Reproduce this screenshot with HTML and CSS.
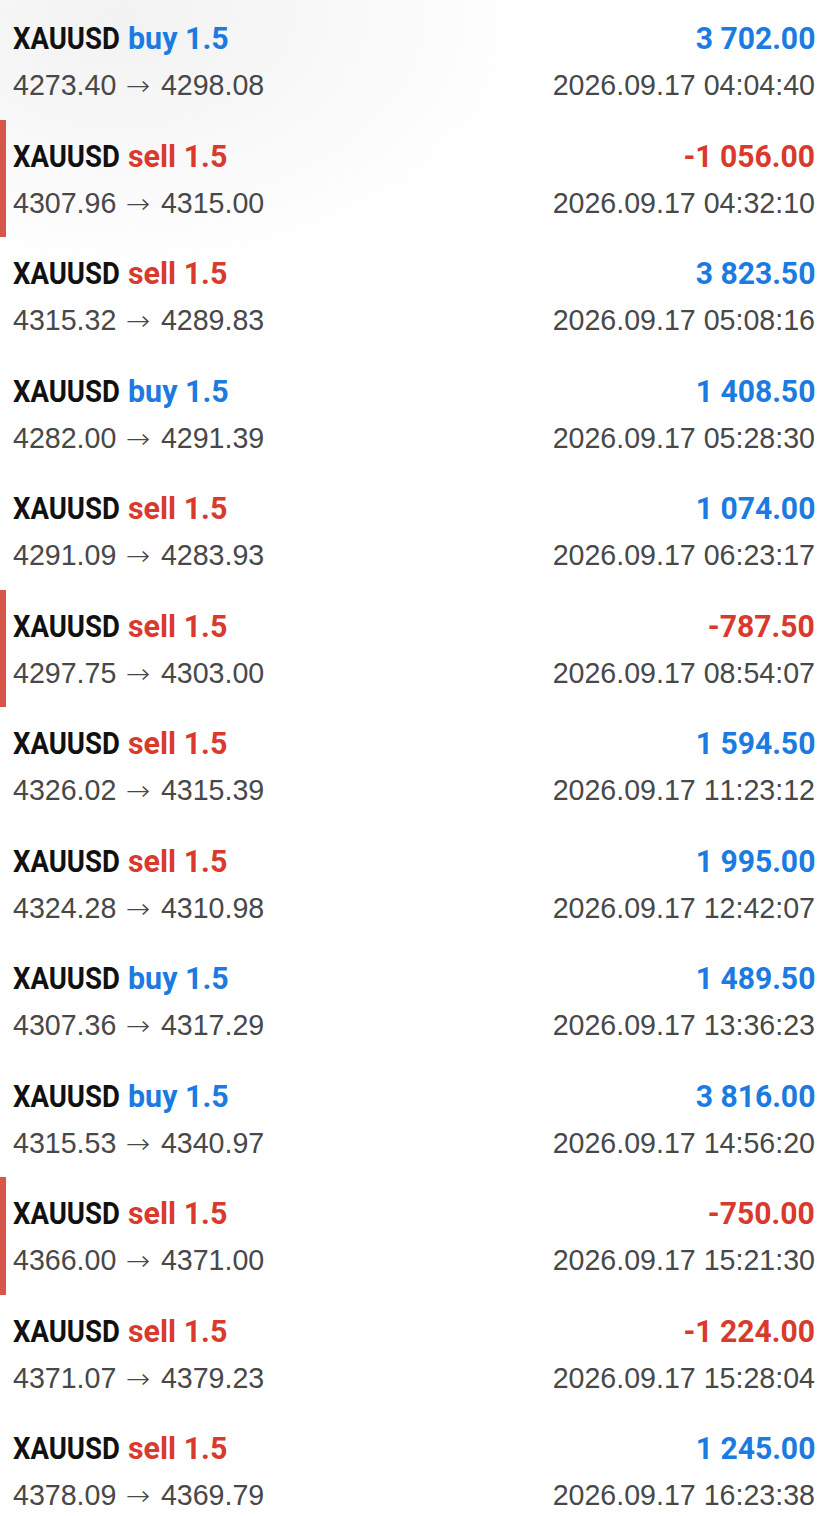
FILE: index.html
```html
<!DOCTYPE html>
<html>

<head>
    <title>History</title>
    <link rel="stylesheet" href="styles.css">
</head>

<body>
    <div class="history">
        <div class="trade">
            <div class="left">
                <div class="title"><span class="sym">XAUUSD</span> <span class="side buy">buy 1.5</span></div>
                <div class="sub">4273.40 <span class="arrow">&rarr;</span> 4298.08</div>
            </div>
            <div class="right">
                <div class="title"><span class="amount buy">3 702.00</span></div>
                <div class="sub">2026.09.17 04:04:40</div>
            </div>
        </div>
        <div class="trade loss">
            <div class="left">
                <div class="title"><span class="sym">XAUUSD</span> <span class="side sell">sell 1.5</span></div>
                <div class="sub">4307.96 <span class="arrow">&rarr;</span> 4315.00</div>
            </div>
            <div class="right">
                <div class="title"><span class="amount sell">-1 056.00</span></div>
                <div class="sub">2026.09.17 04:32:10</div>
            </div>
        </div>
        <div class="trade">
            <div class="left">
                <div class="title"><span class="sym">XAUUSD</span> <span class="side sell">sell 1.5</span></div>
                <div class="sub">4315.32 <span class="arrow">&rarr;</span> 4289.83</div>
            </div>
            <div class="right">
                <div class="title"><span class="amount buy">3 823.50</span></div>
                <div class="sub">2026.09.17 05:08:16</div>
            </div>
        </div>
        <div class="trade">
            <div class="left">
                <div class="title"><span class="sym">XAUUSD</span> <span class="side buy">buy 1.5</span></div>
                <div class="sub">4282.00 <span class="arrow">&rarr;</span> 4291.39</div>
            </div>
            <div class="right">
                <div class="title"><span class="amount buy">1 408.50</span></div>
                <div class="sub">2026.09.17 05:28:30</div>
            </div>
        </div>
        <div class="trade">
            <div class="left">
                <div class="title"><span class="sym">XAUUSD</span> <span class="side sell">sell 1.5</span></div>
                <div class="sub">4291.09 <span class="arrow">&rarr;</span> 4283.93</div>
            </div>
            <div class="right">
                <div class="title"><span class="amount buy">1 074.00</span></div>
                <div class="sub">2026.09.17 06:23:17</div>
            </div>
        </div>
        <div class="trade loss">
            <div class="left">
                <div class="title"><span class="sym">XAUUSD</span> <span class="side sell">sell 1.5</span></div>
                <div class="sub">4297.75 <span class="arrow">&rarr;</span> 4303.00</div>
            </div>
            <div class="right">
                <div class="title"><span class="amount sell">-787.50</span></div>
                <div class="sub">2026.09.17 08:54:07</div>
            </div>
        </div>
        <div class="trade">
            <div class="left">
                <div class="title"><span class="sym">XAUUSD</span> <span class="side sell">sell 1.5</span></div>
                <div class="sub">4326.02 <span class="arrow">&rarr;</span> 4315.39</div>
            </div>
            <div class="right">
                <div class="title"><span class="amount buy">1 594.50</span></div>
                <div class="sub">2026.09.17 11:23:12</div>
            </div>
        </div>
        <div class="trade">
            <div class="left">
                <div class="title"><span class="sym">XAUUSD</span> <span class="side sell">sell 1.5</span></div>
                <div class="sub">4324.28 <span class="arrow">&rarr;</span> 4310.98</div>
            </div>
            <div class="right">
                <div class="title"><span class="amount buy">1 995.00</span></div>
                <div class="sub">2026.09.17 12:42:07</div>
            </div>
        </div>
        <div class="trade">
            <div class="left">
                <div class="title"><span class="sym">XAUUSD</span> <span class="side buy">buy 1.5</span></div>
                <div class="sub">4307.36 <span class="arrow">&rarr;</span> 4317.29</div>
            </div>
            <div class="right">
                <div class="title"><span class="amount buy">1 489.50</span></div>
                <div class="sub">2026.09.17 13:36:23</div>
            </div>
        </div>
        <div class="trade">
            <div class="left">
                <div class="title"><span class="sym">XAUUSD</span> <span class="side buy">buy 1.5</span></div>
                <div class="sub">4315.53 <span class="arrow">&rarr;</span> 4340.97</div>
            </div>
            <div class="right">
                <div class="title"><span class="amount buy">3 816.00</span></div>
                <div class="sub">2026.09.17 14:56:20</div>
            </div>
        </div>
        <div class="trade loss">
            <div class="left">
                <div class="title"><span class="sym">XAUUSD</span> <span class="side sell">sell 1.5</span></div>
                <div class="sub">4366.00 <span class="arrow">&rarr;</span> 4371.00</div>
            </div>
            <div class="right">
                <div class="title"><span class="amount sell">-750.00</span></div>
                <div class="sub">2026.09.17 15:21:30</div>
            </div>
        </div>
        <div class="trade">
            <div class="left">
                <div class="title"><span class="sym">XAUUSD</span> <span class="side sell">sell 1.5</span></div>
                <div class="sub">4371.07 <span class="arrow">&rarr;</span> 4379.23</div>
            </div>
            <div class="right">
                <div class="title"><span class="amount sell">-1 224.00</span></div>
                <div class="sub">2026.09.17 15:28:04</div>
            </div>
        </div>
        <div class="trade">
            <div class="left">
                <div class="title"><span class="sym">XAUUSD</span> <span class="side sell">sell 1.5</span></div>
                <div class="sub">4378.09 <span class="arrow">&rarr;</span> 4369.79</div>
            </div>
            <div class="right">
                <div class="title"><span class="amount buy">1 245.00</span></div>
                <div class="sub">2026.09.17 16:23:38</div>
            </div>
        </div>
    </div>
</body>

</html>
```

FILE: styles.css
```css
body {
    margin: 0;
    background: #fff;
    background-image: radial-gradient(ellipse 420px 260px at 120px 20px, #f2f2f2, #fff);
    background-repeat: no-repeat;
}

.history {
    padding-top: 2px;
}

.trade {
    height: 117.5px;
    box-sizing: border-box;
    padding: 16px 13px 0 13px;
    display: flex;
    justify-content: space-between;
}

/* losing trades get the red bar on the left */
.trade.loss {
    border-left: 6px solid #d8554b;
    padding-left: 7px;
}

.left,
.right {
    display: flex;
    flex-direction: column;
}

.right {
    align-items: flex-end;
}

.title {
    height: 41px;
    line-height: 41px;
    font-family: Roboto, "Liberation Sans", sans-serif;
    font-weight: bold;
    font-size: 32px;
    color: #111;
    white-space: nowrap;
}

.sym,
.side,
.amount {
    display: inline-block;
    transform-origin: left center;
}

.sym {
    transform: scaleX(0.86);
    margin-right: -17px;
}

.side {
    transform: scaleX(0.95);
}

.amount {
    transform: scaleX(0.94);
    transform-origin: right center;
}

.buy {
    color: #1b7be1;
}

.sell {
    color: #d83a2d;
}

.sub {
    height: 53px;
    line-height: 53px;
    font-family: "Liberation Sans", Arial, sans-serif;
    font-size: 28.6px;
    font-kerning: none;
    color: #484848;
    white-space: nowrap;
}

.arrow {
    display: inline-block;
    margin: 0 3px;
    transform: scaleX(1.08);
    font-family: "DejaVu Sans", sans-serif;
    font-weight: 200;
    font-size: 27px;
}
```
